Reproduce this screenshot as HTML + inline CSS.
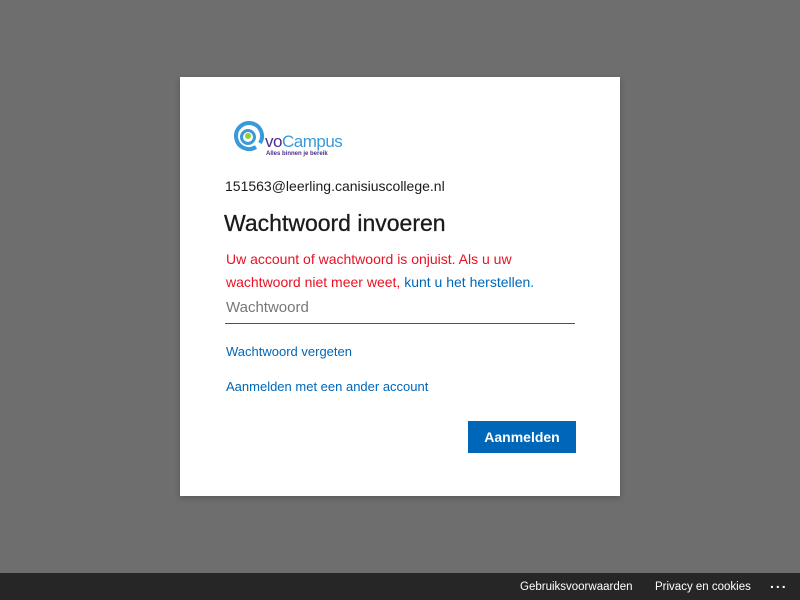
<!DOCTYPE html>
<html><head><meta charset="utf-8"><style>
body{margin:0;width:800px;height:600px;background:#6e6e6e;font-family:"Liberation Sans",sans-serif;position:relative;overflow:hidden}
.card{position:absolute;left:180px;top:77px;width:440px;height:419px;background:#fff;box-shadow:0 2px 6px rgba(0,0,0,.2)}
.a{position:absolute;white-space:nowrap}
.link{color:#0067b8;font-size:13px}
.foot{position:absolute;left:0;top:573px;width:800px;height:27px;background:#262626;color:#fff;font-size:12px}
</style></head><body>
<div class="card">
<svg class="a" style="left:52px;top:44px" width="115" height="38" viewBox="0 0 115 38">
<path d="M28 22 A13 13 0 1 0 24 26" fill="none" stroke="#3a9ad9" stroke-width="4"/>
<circle cx="16" cy="16" r="6.5" fill="none" stroke="#3a9ad9" stroke-width="3"/>
<circle cx="16" cy="15" r="3" fill="#9acd32"/>
<text x="33" y="26" font-family="Liberation Sans" font-size="17" fill="#4b2c8a" letter-spacing="-0.5">vo</text>
<text x="50" y="26" font-family="Liberation Sans" font-size="17" fill="#3a9ad9" letter-spacing="-0.5">Campus</text>
<text x="34" y="34" font-family="Liberation Sans" font-size="6" font-weight="bold" fill="#4b2c8a">Alles binnen je bereik</text>
</svg>
<div class="a" style="left:45px;top:101px;font-size:14px;color:#1b1b1b">151563@leerling.canisiuscollege.nl</div>
<div class="a" style="left:44px;top:133px;font-size:23px;color:#1b1b1b;font-weight:500;-webkit-text-stroke:0.3px #1b1b1b">Wachtwoord invoeren</div>
<div class="a" style="left:46px;top:171px;font-size:14px;line-height:23px;color:#e81123">Uw account of wachtwoord is onjuist. Als u uw<br>wachtwoord niet meer weet, <span style="color:#0067b8">kunt u het herstellen.</span></div>
<div class="a" style="left:46px;top:222px;font-size:15px;color:#777">Wachtwoord</div>
<div class="a" style="left:45px;top:246px;width:350px;height:0;border-top:1px solid #e81123"></div>
<div class="a link" style="left:46px;top:267px">Wachtwoord vergeten</div>
<div class="a link" style="left:46px;top:302px">Aanmelden met een ander account</div>
<div class="a" style="left:288px;top:344px;width:108px;height:32px;background:#0067b8;color:#fff;font-size:14px;font-weight:bold;line-height:32px;text-align:center">Aanmelden</div>
</div>
<div class="foot">
<span class="a" style="left:520px;top:8px;font-size:11.5px">Gebruiksvoorwaarden</span>
<span class="a" style="left:655px;top:8px;font-size:11.5px">Privacy en cookies</span>
<span class="a" style="left:770px;top:2px;font-size:14px;font-weight:bold;letter-spacing:2px">...</span>
</div>
</body></html>
